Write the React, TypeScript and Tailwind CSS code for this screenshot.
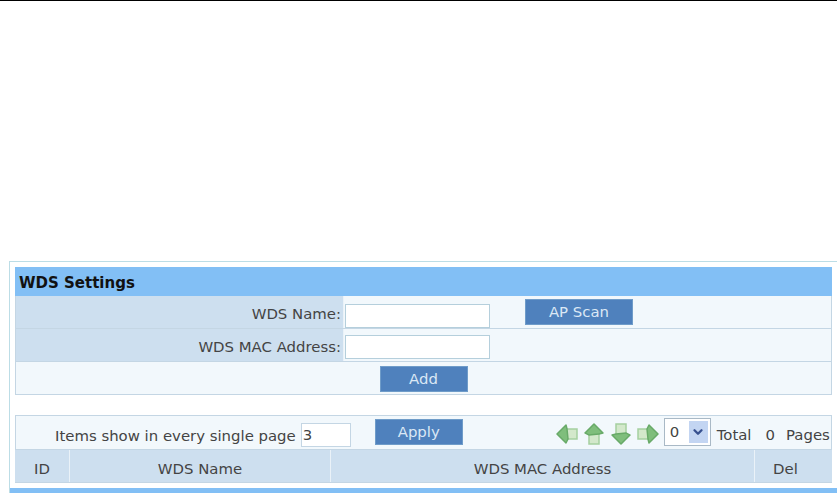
import { ChevronDown } from 'lucide-react';

function Arrow({ rotate }: { rotate: string }) {
  return (
    <svg width="22" height="20" viewBox="0 0 22 20" className={`${rotate} blur-[0.6px]`}>
      <path d="M10 5 L21 5 L21 15 L10 15 Z" fill="#d3e8cb" stroke="#a5d0a0" strokeWidth="1.5" />
      <path d="M1 10 L10 1 L11 5 L12 15 L10 19 Z" fill="#7fbe7c" stroke="#68aa68" strokeWidth="1.5" strokeLinejoin="round" />
    </svg>
  );
}

function FormRow({ label, children }: { label: string; children: React.ReactNode }) {
  return (
    <div className="flex h-[33px] border-b border-[#c4d6e4]">
      <div className="w-[328px] bg-[#cddfef] flex items-center justify-end pr-[2px] pt-[5px] border-r border-[#eaf2f8]">{label}</div>
      <div className="flex-1 bg-[#f2f8fc] flex items-center pl-[1px]">{children}</div>
    </div>
  );
}

function Button({ label, width }: { label: string; width: string }) {
  return (
    <div className={`${width} h-[26px] bg-[#4f81bd] border border-[#6f9cc9] text-[#dbe8f5] flex items-center justify-center`}>
      {label}
    </div>
  );
}

export default function App() {
  return (
    <div className="w-[837px] h-[493px] overflow-hidden bg-white text-[14.9px] text-[#444] font-['DejaVu_Sans','Noto_Sans',sans-serif]">
      <div className="h-[1px] bg-black" />
      <div className="mt-[260px] ml-[9px] border-t border-l border-[#bcdde6] h-[232px] pt-[5px] pl-[5px] pr-[5px] flex flex-col">
        <div className="h-[29px] bg-[#82bff5] flex items-center pl-[4px] pt-[3px] font-bold text-[15px] text-[#111]">WDS Settings</div>
        <div className="border-l border-r border-[#c4d6e4]">
          <FormRow label="WDS Name:">
            <input className="w-[145px] h-[24px] mt-[8px] bg-white border border-[#b5cfdc]" />
            <div className="ml-[35px]">
              <Button label="AP Scan" width="w-[108px]" />
            </div>
          </FormRow>
          <FormRow label="WDS MAC Address:">
            <input className="w-[145px] h-[24px] mt-[4px] bg-white border border-[#b5cfdc]" />
          </FormRow>
          <div className="h-[33px] bg-[#f2f8fc] border-b border-[#c4d6e4] flex items-center justify-center pt-[2px]">
            <Button label="Add" width="w-[88px]" />
          </div>
        </div>
        <div className="mt-[20px] h-[36px] bg-[#f2f8fc] border border-[#c4d6e4] flex items-center">
          <span className="ml-[39px] pt-[8px] whitespace-nowrap">Items show in every single page</span>
          <input defaultValue="3" className="ml-[5px] w-[50px] h-[24px] mt-[4px] bg-white border border-[#c4d6e4] pl-[1px]" />
          <div className="ml-[24px] -mt-[1px]">
            <Button label="Apply" width="w-[88px]" />
          </div>
          <div className="ml-[93px] mt-[3px] flex items-center gap-[5px]">
            <Arrow rotate="" />
            <Arrow rotate="rotate-90" />
            <Arrow rotate="-rotate-90" />
            <Arrow rotate="rotate-180" />
          </div>
          <div className="ml-[5px] -mt-[1px] w-[47px] h-[28px] shrink-0 bg-white border border-[#a9b9c6] flex items-center justify-between pl-[5px] pr-[2px]">
            <span>0</span>
            <span className="w-[19px] h-[22px] bg-[#c3d5f2] flex items-center justify-center">
              <ChevronDown className="w-[14px] h-[14px] text-[#37508f]" strokeWidth={4} />
            </span>
          </div>
          <span className="ml-[6px] pt-[6px] whitespace-nowrap">Total</span>
          <span className="ml-[14px] pt-[6px]">0</span>
          <span className="ml-[11px] pt-[6px] whitespace-nowrap">Pages</span>
        </div>
        <div className="h-[33px] flex bg-[#cddfef] border-b border-[#c4d6e4] text-center items-stretch">
          <div className="w-[55px] flex items-center justify-center pt-[5px] border-r border-[#eaf2f8]">ID</div>
          <div className="w-[261px] flex items-center justify-center pt-[5px] border-r border-[#eaf2f8]">WDS Name</div>
          <div className="w-[424px] flex items-center justify-center pt-[5px] border-r border-[#eaf2f8]">WDS MAC Address</div>
          <div className="flex-1 flex items-center justify-center pt-[5px] pr-[16px]">Del</div>
        </div>
        <div className="mt-[5px] -ml-[5px] -mr-[5px] h-[5px] bg-[#82bff5]" />
      </div>
    </div>
  );
}
